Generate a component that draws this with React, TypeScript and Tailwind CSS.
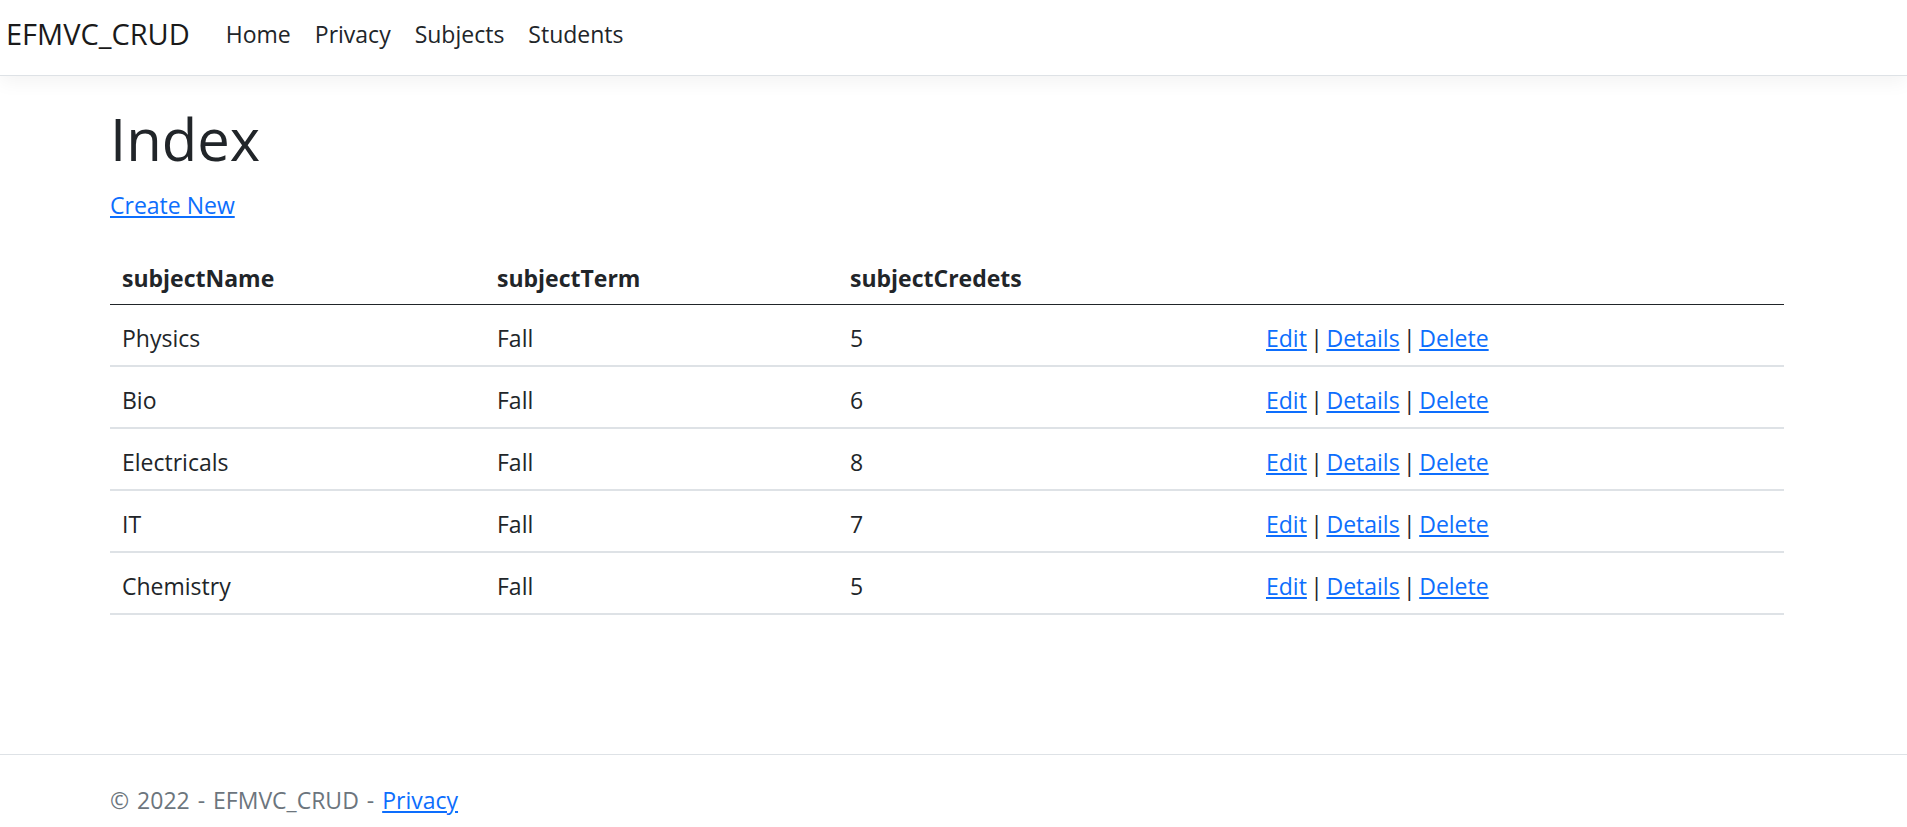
import React from 'react';

interface Subject {
  name: string;
  term: string;
  credits: number;
}

const subjects: Subject[] = [
  { name: 'Physics', term: 'Fall', credits: 5 },
  { name: 'Bio', term: 'Fall', credits: 6 },
  { name: 'Electricals', term: 'Fall', credits: 8 },
  { name: 'IT', term: 'Fall', credits: 7 },
  { name: 'Chemistry', term: 'Fall', credits: 5 },
];

const navLinks = ['Home', 'Privacy', 'Subjects', 'Students'];

function Header() {
  return (
    <header className="h-[76px] border-b border-[#dee2e6] bg-white shadow-[0_6px_18px_rgba(0,0,0,0.05)] relative z-10">
      <nav className="h-full flex items-center pl-[6px] pb-2">
        <a href="#" className="text-[29px] leading-[36px] text-[#1a1a1a] mr-6">
          EFMVC_CRUD
        </a>
        <ul className="flex items-center">
          {navLinks.map((link) => (
            <li key={link}>
              <a href="#" className="block px-3 text-[23px] leading-[36px] text-[#212529]">
                {link}
              </a>
            </li>
          ))}
        </ul>
      </nav>
    </header>
  );
}

const thClass = 'px-3 pt-[13px] pb-[8px] leading-[36px] font-bold border-b border-[#212529]';
const tdClass = 'px-3 pt-[15px] pb-[9px] leading-[36px] border-b-2 border-[#dee2e6]';

function SubjectTable() {
  return (
    <table className="w-full border-collapse text-left text-[#212529] table-fixed">
      <colgroup>
        <col className="w-[375px]" />
        <col className="w-[353px]" />
        <col className="w-[416px]" />
        <col />
      </colgroup>
      <thead>
        <tr>
          <th className={thClass}>subjectName</th>
          <th className={thClass}>subjectTerm</th>
          <th className={thClass}>subjectCredets</th>
          <th className={thClass}></th>
        </tr>
      </thead>
      <tbody>
        {subjects.map((s) => (
          <tr key={s.name}>
            <td className={tdClass}>{s.name}</td>
            <td className={tdClass}>{s.term}</td>
            <td className={tdClass}>{s.credits}</td>
            <td className={`${tdClass} [word-spacing:-2.5px]`}>
              <a href="#" className="text-[#0d6efd] underline">Edit</a> |{' '}
              <a href="#" className="text-[#0d6efd] underline">Details</a> |{' '}
              <a href="#" className="text-[#0d6efd] underline">Delete</a>
            </td>
          </tr>
        ))}
      </tbody>
    </table>
  );
}

export default function App() {
  return (
    <div
      className="min-h-[845px] flex flex-col bg-white text-[23px] text-[#212529]"
      style={{ fontFamily: '"Open Sans", "Noto Sans", sans-serif' }}
    >
      <Header />
      <main className="flex-1 pt-[27px] pl-[110px] pr-[123px]">
        <h1 className="text-[58px] leading-[72px] font-medium mb-3">Index</h1>
        <p className="leading-[36px] mb-[24px]">
          <a href="#" className="text-[#0d6efd] underline">Create New</a>
        </p>
        <SubjectTable />
      </main>
      <footer className="h-[91px] border-t border-[#dee2e6] pl-[110px] leading-[90px] text-[#6c757d] [word-spacing:2px]">
        &copy; 2022 - EFMVC_CRUD - <a href="#" className="text-[#0d6efd] underline">Privacy</a>
      </footer>
    </div>
  );
}
